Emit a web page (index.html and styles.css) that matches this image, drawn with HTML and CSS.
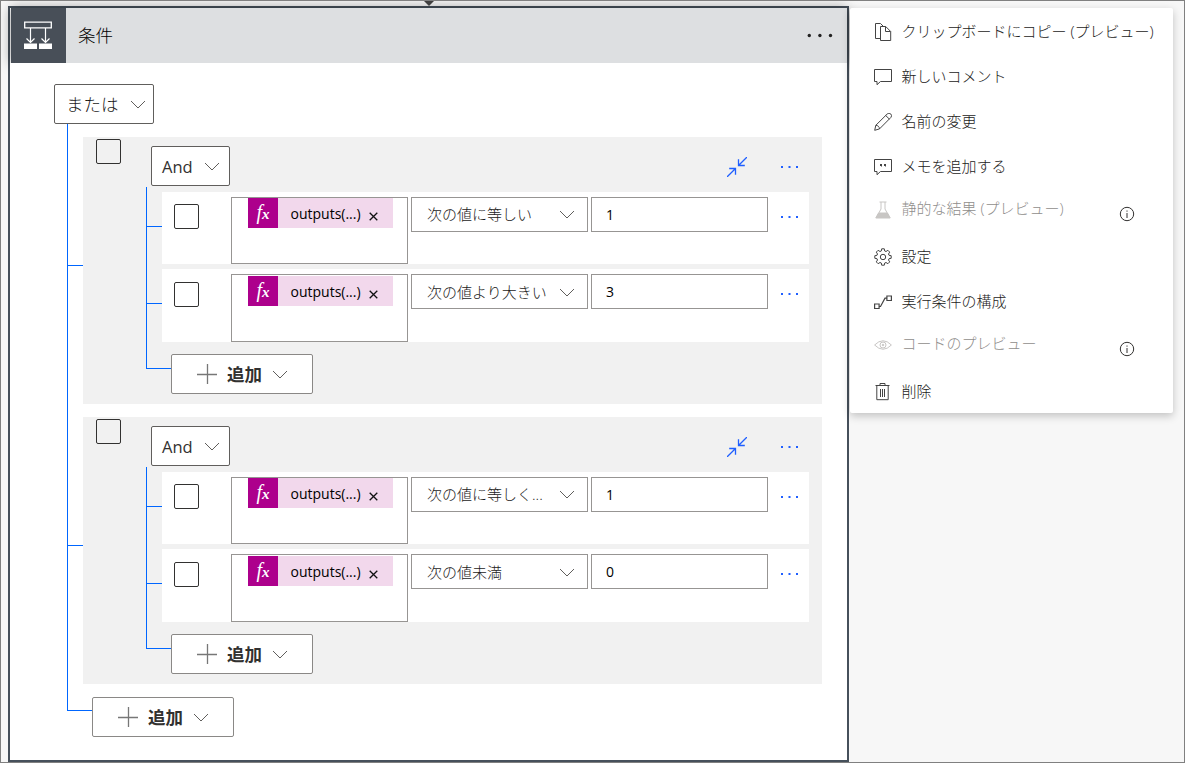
FILE: index.html
```
<!DOCTYPE html>
<html lang="ja">
<head>
<meta charset="utf-8">
<title>条件</title>
<link rel="stylesheet" href="styles.css">
</head>
<body>
<svg class="defs" width="0" height="0">
  <symbol id="chev" viewBox="0 0 16 9"><path d="M1 1l7 7 7-7" fill="none" stroke="currentColor"/></symbol>
  <symbol id="plus" viewBox="0 0 20 20"><path d="M0 10.5h20M10.5 0v20" fill="none" stroke="currentColor" stroke-width="1.3"/></symbol>
  <symbol id="dots" viewBox="0 0 20 4"><path d="M1 1h2v2H1zM8.500 1h2v2h-2zM16 1h2v2h-2z" fill="currentColor"/></symbol>
  <symbol id="collapse" viewBox="0 0 20 20"><path d="M20 0l-8.500 8.500M11.500 2.200v6.300h6.300M0 20l8.500-8.500M8.500 17.800v-6.300H2.200" fill="none" stroke="currentColor" stroke-width="1.300"/></symbol>
  <symbol id="info" viewBox="0 0 16 16"><circle cx="8" cy="8" r="6.700" fill="none" stroke="currentColor"/><path d="M8 7v5M8 4.500v1.200" stroke="currentColor"/></symbol>
</svg>
<main class="canvas">
  <section class="card">
    <header class="card-head">
      <span class="card-icon">
        <svg width="30" height="30" viewBox="0 0 30 30" fill="none" stroke="#fff"><path d="M1.700 2.200h26.600v5.600H1.700z" stroke-width="1.300"/><path d="M7.500 8v14.500M3.500 18.500l4 4 4-4M22.500 8v14.500M18.500 18.500l4 4 4-4" stroke-width="1.200"/><path d="M1 23.500h13v5.500H1zM16 23.500h13v5.500H16z" fill="#fff" stroke="none"/></svg>
      </span>
      <h1 class="card-title">条件</h1>
      <svg class="head-dots" width="28" height="5" viewBox="0 0 28 5"><circle cx="3.300" cy="2.500" r="1.700"/><circle cx="13.900" cy="2.500" r="1.700"/><circle cx="24.500" cy="2.500" r="1.700"/></svg>
    </header>
    <div class="card-body">
      <button class="btn btn-or"><span>または</span><svg class="chev"><use href="#chev"/></svg></button>
      <div class="tree">
        <div class="branch">
          <span class="stem"></span>
          <div class="group">
            <div class="group-head">
              <span class="check"></span>
              <button class="btn btn-and">And<svg class="chev"><use href="#chev"/></svg></button>
              <svg class="collapse"><use href="#collapse"/></svg>
              <svg class="dots"><use href="#dots"/></svg>
            </div>
            <div class="subtree">
              <div class="sub-branch">
                <span class="stem"></span>
                <div class="row">
                  <span class="check"></span>
                  <div class="field operand"><span class="token"><i class="fx">f<b>x</b></i><span class="token-text">outputs(...)</span><svg class="close" viewBox="0 0 9 9"><path d="M.7.7l7.600 7.600M8.300.7L.7 8.300"/></svg></span></div>
                  <div class="field select"><span>次の値に等しい</span><svg class="chev"><use href="#chev"/></svg></div>
                  <div class="field value">1</div>
                  <svg class="dots"><use href="#dots"/></svg>
                </div>
              </div>
              <div class="sub-branch second">
                <span class="stem"></span>
                <div class="row">
                  <span class="check"></span>
                  <div class="field operand"><span class="token"><i class="fx">f<b>x</b></i><span class="token-text">outputs(...)</span><svg class="close" viewBox="0 0 9 9"><path d="M.7.7l7.600 7.600M8.300.7L.7 8.300"/></svg></span></div>
                  <div class="field select"><span>次の値より大きい</span><svg class="chev"><use href="#chev"/></svg></div>
                  <div class="field value">3</div>
                  <svg class="dots"><use href="#dots"/></svg>
                </div>
              </div>
              <div class="add-row">
                <span class="elbow"></span>
                <button class="btn btn-add"><svg class="plus"><use href="#plus"/></svg><span>追加</span><svg class="chev"><use href="#chev"/></svg></button>
              </div>
            </div>
          </div>
        </div>
        <div class="branch">
          <span class="stem"></span>
          <div class="group">
            <div class="group-head">
              <span class="check"></span>
              <button class="btn btn-and">And<svg class="chev"><use href="#chev"/></svg></button>
              <svg class="collapse"><use href="#collapse"/></svg>
              <svg class="dots"><use href="#dots"/></svg>
            </div>
            <div class="subtree">
              <div class="sub-branch">
                <span class="stem"></span>
                <div class="row">
                  <span class="check"></span>
                  <div class="field operand"><span class="token"><i class="fx">f<b>x</b></i><span class="token-text">outputs(...)</span><svg class="close" viewBox="0 0 9 9"><path d="M.7.7l7.600 7.600M8.300.7L.7 8.300"/></svg></span></div>
                  <div class="field select"><span>次の値に等しく...</span><svg class="chev"><use href="#chev"/></svg></div>
                  <div class="field value">1</div>
                  <svg class="dots"><use href="#dots"/></svg>
                </div>
              </div>
              <div class="sub-branch second">
                <span class="stem"></span>
                <div class="row">
                  <span class="check"></span>
                  <div class="field operand"><span class="token"><i class="fx">f<b>x</b></i><span class="token-text">outputs(...)</span><svg class="close" viewBox="0 0 9 9"><path d="M.7.7l7.600 7.600M8.300.7L.7 8.300"/></svg></span></div>
                  <div class="field select"><span>次の値未満</span><svg class="chev"><use href="#chev"/></svg></div>
                  <div class="field value">0</div>
                  <svg class="dots"><use href="#dots"/></svg>
                </div>
              </div>
              <div class="add-row">
                <span class="elbow"></span>
                <button class="btn btn-add"><svg class="plus"><use href="#plus"/></svg><span>追加</span><svg class="chev"><use href="#chev"/></svg></button>
              </div>
            </div>
          </div>
        </div>
        <div class="add-row outer">
          <span class="elbow"></span>
          <button class="btn btn-add"><svg class="plus"><use href="#plus"/></svg><span>追加</span><svg class="chev"><use href="#chev"/></svg></button>
        </div>
      </div>
    </div>
  </section>
  <ul class="menu">
    <li><svg class="mi" viewBox="0 0 18 18"><path d="M6 15.500H1.500V.5h5l3 3M6.500 3.500h5.200l5 5v9H6.500zM11.500 3.500v5h5"/></svg><span>クリップボードにコピー (プレビュー)</span></li>
    <li><svg class="mi" viewBox="0 0 18 18"><path d="M.5 1.500h17v12H6.500L3 16.700v-3.200H.5z"/></svg><span>新しいコメント</span></li>
    <li><svg class="mi" viewBox="0 0 18 18"><path d="M.7 17.300l1.100-5L13.200 1a2.300 2.300 0 0 1 3.600 3.500L5.500 15.900zM1.800 12.300c2 0 3.700 1.600 3.700 3.600M11.700 2.500l3.700 3.600"/></svg><span>名前の変更</span></li>
    <li><svg class="mi" viewBox="0 0 18 18"><path d="M.5 1.500h17v12H6.500L3 16.700v-3.200H.5z"/><path d="M6 6h2v2l-1 1V8H6zM10 6h2v2l-1 1V8h-1z" fill="currentColor" stroke="none"/></svg><span>メモを追加する</span></li>
    <li class="off"><svg class="mi" viewBox="0 0 18 18"><path d="M5.500 1h7M7 1v7L2.300 16.500h13.400L11 8V1"/><path d="M4.500 12h9l2.700 5H1.800z" fill="currentColor"/></svg><span>静的な結果 (プレビュー)</span><svg class="info"><use href="#info"/></svg></li>
    <li><svg class="mi" viewBox="0 0 18 18"><circle cx="9" cy="9" r="2.700"/><path d="M7.700.8h2.600l.4 2.200 1.300.5 1.900-1.200 1.800 1.800L14.500 6l.5 1.300 2.200.4v2.600l-2.200.4-.5 1.300 1.200 1.900-1.800 1.800-1.900-1.200-1.300.5-.4 2.200H7.700L7.300 15 6 14.500l-1.900 1.200-1.800-1.800L3.500 12 3 10.700.8 10.300V7.700L3 7.300 3.500 6 2.300 4.100l1.800-1.800L6 3.500 7.300 3z"/></svg><span>設定</span></li>
    <li><svg class="mi" viewBox="0 0 18 18"><path d="M.6 11h4.500v4.500H.6zM12.900 3h4.500v4.500h-4.500zM5.200 13.500h1.300L11 5.200h1.800" stroke-width="1.200"/></svg><span>実行条件の構成</span></li>
    <li class="off eye"><svg class="mi" viewBox="0 0 18 18"><path d="M.6 9Q9 .5 17.400 9 9 17.500.6 9z"/><circle cx="9" cy="9" r="3"/><circle cx="9" cy="9" r=".8" fill="currentColor"/></svg><span>コードのプレビュー</span><svg class="info"><use href="#info"/></svg></li>
    <li><svg class="mi" viewBox="0 0 18 18"><path d="M1.500 2.500h14M6 2.500v-2h5v2M2.800 2.500v14.200h11.400V2.500M6.500 6v8M8.500 6v8M10.500 6v8"/></svg><span>削除</span></li>
  </ul>
  <svg class="arrow" width="12" height="6" viewBox="0 0 12 6"><path d="M1 0h10L6 5z"/></svg>
</main>
</body>
</html>
```
FILE: styles.css
```
* { box-sizing: border-box; }
body {
  margin: 0;
  font-family: "Open Sans", "Noto Sans CJK JP", sans-serif;
  font-size: 15px;
  color: #1c1b1a;
}
svg { flex: none; display: block; }
.defs { position: absolute; }
.canvas {
  position: relative;
  display: flex;
  align-items: flex-start;
  width: 1185px;
  height: 763px;
  padding: 5px 0 0 7px;
  border: 1px solid #808080;
  background: #f7f7f7;
  overflow: hidden;
}
.arrow { position: absolute; left: 422px; top: 0; fill: #3f3f3f; }

/* condition card */
.card {
  flex: none;
  width: 841px;
  height: 756px;
  border: 2px solid #46505b;
  background: #fff;
}
.card-head {
  display: flex;
  align-items: center;
  height: 55px;
  margin-left: 1px;
  background: #dddfe1;
  box-shadow: 0 0 12px rgba(0, 0, 0, .4);
}
.card-icon {
  display: flex;
  align-items: center;
  justify-content: center;
  width: 55px;
  height: 55px;
  padding: 0 1px 1px 0;
  background: #484f58;
}
.card-title {
  flex: 1;
  margin: 0 0 1px 12px;
  font-size: 17.500px;
  line-height: 24px;
  font-weight: 300;
  color: #000;
}
.head-dots { margin-right: 13px; fill: #222; }
.card-body {
  position: relative;
  height: 697px;
  padding: 21px 0 0 44px;
  background: #fff;
}
.btn {
  display: flex;
  align-items: center;
  height: 40px;
  padding: 0 0 0 11px;
  border: 1px solid #605e5c;
  border-radius: 2px;
  background: #fff;
  font: 300 17.500px "Open Sans", "Noto Sans CJK JP", sans-serif;
  color: #1c1b1a;
}
.btn span { margin-bottom: 2px; }
.chev { width: 16px; height: 9px; color: #605e5c; }
.btn-or { width: 100px; }
.btn-or .chev { margin-left: 11px; }
.btn-and { width: 79px; margin: 9px 0 0 30px; font-weight: 400; font-size: 16.500px; padding-left: 10px; color: #323130; }
.btn-and .chev { margin-left: 11px; }
.btn-add { width: 142px; padding-left: 25px; border-color: #8a8886; font-weight: 700; color: #323130; }
.plus { width: 20px; height: 20px; margin-right: 10px; color: #777; }
.btn-add .chev { margin-left: 10px; }

/* connector tree */
.tree { margin-left: 13px; }
.branch {
  display: flex;
  align-items: flex-start;
  padding-top: 13px;
  border-left: 1px solid #0066ff;
}
.stem { flex: none; width: 15px; border-top: 1px solid #0066ff; }
.branch > .stem { margin-top: 128px; }
.group { width: 739px; height: 267px; background: #f1f1f1; }
.group-head { display: flex; align-items: flex-start; height: 50px; padding-left: 13px; }
.check {
  flex: none;
  width: 25px;
  height: 25px;
  border: 1px solid #323130;
  border-radius: 2px;
}
.group-head .check { margin-top: 2px; }
.collapse { width: 20px; height: 20px; margin: 20px 0 0 497px; color: #1f5fff; }
.dots { width: 20px; height: 4px; color: #1f5fff; }
.group-head .dots { margin: 28px 0 0 33px; }
.subtree { margin-left: 63px; }
.sub-branch { display: flex; align-items: flex-start; height: 77px; padding-top: 5px; border-left: 1px solid #0066ff; }
.sub-branch .stem { margin-top: 34px; }
.second { height: 78px; }
.row { display: flex; align-items: flex-start; width: 647px; height: 100%; padding-left: 12px; background: #fff; }
.row .check { margin: 12px 32px 0 0; }
.second .check { margin-top: 13px; }
.field {
  display: flex;
  align-items: center;
  flex: none;
  width: 177px;
  height: 35px;
  margin: 5px 3px 0 0;
  padding-left: 15px;
  border: 1px solid #979593;
  background: #fff;
}
.operand { height: 67px; align-items: flex-start; padding-left: 16px; }
.second .operand { height: 68px; padding-top: 1px; }
.token { display: flex; align-items: center; width: 145px; height: 30px; background: #f2d8ec; color: #000; }
.fx {
  width: 30px;
  height: 30px;
  background: #ad008c;
  color: #fff;
  font: italic 400 20px/28px "Liberation Serif", serif;
  text-align: center;
}
.fx b { font-size: 15px; }
.token-text { width: 70px; margin-left: 12.500px; font-size: 14px; white-space: nowrap; }
.close { width: 9px; height: 9px; margin: 6px 0 0 8px; fill: none; stroke: #111; stroke-width: 1.3; }
.select { justify-content: space-between; padding-right: 12px; font-weight: 300; }
.select span { margin-bottom: 2px; }
.second .select { padding-top: 2px; }
.value { padding-left: 14px; font-size: 14px; color: #000; }
.row .dots { margin: 23px 0 0 9px; }

.add-row { display: flex; align-items: flex-start; }
.elbow { flex: none; width: 25px; height: 27px; border: solid #0066ff; border-width: 0 0 1px 1px; }
.add-row .btn { margin-top: 12px; }
.outer .btn { margin-top: 13px; }

/* context menu */
.menu {
  position: relative;
  flex: none;
  width: 323px;
  height: 405px;
  margin: 2px 0 0 1px;
  padding: 1px 0 0 24px;
  list-style: none;
  background: #fff;
  border-radius: 2px;
  box-shadow: 0 3px 8px rgba(0, 0, 0, .22);
  font-weight: 300;
}
.menu li { display: flex; align-items: center; height: 45px; white-space: nowrap; }
.menu span { margin-bottom: 2px; }
.mi { width: 18px; height: 18px; margin-right: 9.500px; fill: none; stroke: currentColor; color: #444; }
.off { color: #908e8c; }
.menu .off span { margin-bottom: 8px; }
.off .mi { color: #c8c6c4; margin-bottom: 3px; }
.info { width: 16px; height: 16px; margin: 4px 38px 0 auto; color: #323130; }
```
